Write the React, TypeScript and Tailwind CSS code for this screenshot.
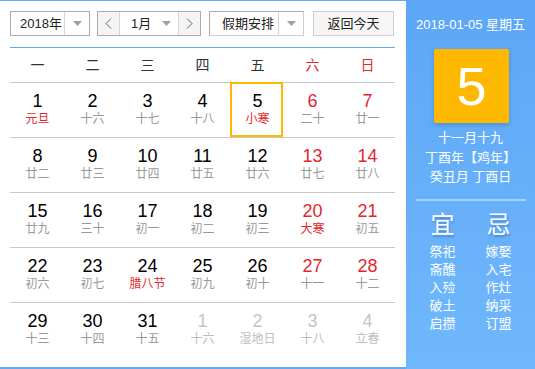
const FONT = { fontFamily: '"Liberation Sans", "Noto Sans CJK SC", sans-serif' }

type Day = { d: number; l: string; kind?: 'wk' | 'we' | 'next'; fest?: boolean }

const weeks: Day[][] = [
  [
    { d: 1, l: '元旦', fest: true },
    { d: 2, l: '十六' },
    { d: 3, l: '十七' },
    { d: 4, l: '十八' },
    { d: 5, l: '小寒', fest: true },
    { d: 6, l: '二十', kind: 'we' },
    { d: 7, l: '廿一', kind: 'we' },
  ],
  [
    { d: 8, l: '廿二' },
    { d: 9, l: '廿三' },
    { d: 10, l: '廿四' },
    { d: 11, l: '廿五' },
    { d: 12, l: '廿六' },
    { d: 13, l: '廿七', kind: 'we' },
    { d: 14, l: '廿八', kind: 'we' },
  ],
  [
    { d: 15, l: '廿九' },
    { d: 16, l: '三十' },
    { d: 17, l: '初一' },
    { d: 18, l: '初二' },
    { d: 19, l: '初三' },
    { d: 20, l: '大寒', kind: 'we', fest: true },
    { d: 21, l: '初五', kind: 'we' },
  ],
  [
    { d: 22, l: '初六' },
    { d: 23, l: '初七' },
    { d: 24, l: '腊八节', fest: true },
    { d: 25, l: '初九' },
    { d: 26, l: '初十' },
    { d: 27, l: '十一', kind: 'we' },
    { d: 28, l: '十二', kind: 'we' },
  ],
  [
    { d: 29, l: '十三' },
    { d: 30, l: '十四' },
    { d: 31, l: '十五' },
    { d: 1, l: '十六', kind: 'next' },
    { d: 2, l: '湿地日', kind: 'next' },
    { d: 3, l: '十八', kind: 'next' },
    { d: 4, l: '立春', kind: 'next' },
  ],
]

const weekdays = ['一', '二', '三', '四', '五', '六', '日']
const yi = ['祭祀', '斋醮', '入殓', '破土', '启攒']
const ji = ['嫁娶', '入宅', '作灶', '纳采', '订盟']

function Caret() {
  return (
    <svg width="9" height="5" viewBox="0 0 9 5">
      <path d="M0 0h9L4.5 5z" fill="#a0a0a0" />
    </svg>
  )
}

function DayCell({ day, selected }: { day: Day; selected: boolean }) {
  const numColor =
    day.kind === 'next' ? 'text-[#c4c4c4]' : day.kind === 'we' ? 'text-[#e3262d]' : 'text-black'
  const lunarColor =
    day.kind === 'next' ? 'text-[#bdbdbd]' : day.fest ? 'text-[#e3262d]' : 'text-[#999]'
  return (
    <div className="relative flex flex-col items-center pt-[8px]">
      {selected && (
        <div className="absolute left-0 top-[-1px] w-[53px] h-[55px] border-2 border-[#ffb800]" />
      )}
      <span className={`text-[18px] leading-[20px] ${numColor}`}>{day.d}</span>
      <span className={`text-[12px] leading-[16px] ${lunarColor}`}>{day.l}</span>
    </div>
  )
}

export default function App() {
  return (
    <div className="flex w-[535px] h-[369px] bg-white" style={FONT}>
      <div className="w-[406px] h-full border-t border-b-2 border-[#5faaf5] pl-[10px] pr-[11px] pt-[10px]">
        <div className="flex items-center h-[25px] text-[13px] text-[#222]">
          <div className="flex h-[25px] w-[80px] border border-[#ababab]">
            <div className="flex-1 flex items-center pl-[9px]">2018年</div>
            <div className="w-[25px] flex items-center justify-center border-l border-[#d6d6d6]">
              <Caret />
            </div>
          </div>
          <div className="flex h-[25px] w-[104px] ml-[7px] border border-[#ababab]">
            <div className="w-[22px] flex items-center justify-center bg-[#f4f4f4] border-r border-[#d6d6d6] text-[#555]">
              <svg width="7" height="11" viewBox="0 0 7 11">
                <path d="M6 0.5L1 5.5l5 5" stroke="#666" fill="none" />
              </svg>
            </div>
            <div className="flex-1 flex items-center pl-[11px] pr-[7px] justify-between">
              <span>1月</span>
              <Caret />
            </div>
            <div className="w-[22px] flex items-center justify-center bg-[#f4f4f4] border-l border-[#d6d6d6]">
              <svg width="7" height="11" viewBox="0 0 7 11">
                <path d="M1 0.5l5 5-5 5" stroke="#666" fill="none" />
              </svg>
            </div>
          </div>
          <div className="flex h-[25px] w-[95px] ml-[8px] border border-[#ababab] border-r-[#cfcfcf] border-b-[#cfcfcf]">
            <div className="flex-1 flex items-center pl-[12px]">假期安排</div>
            <div className="w-[25px] flex items-center justify-center border-l border-[#d6d6d6]">
              <Caret />
            </div>
          </div>
          <div className="flex h-[25px] w-[81px] ml-[9px] items-center justify-center border border-[#cfcfcf] bg-[#f6f6f6]">
            返回今天
          </div>
        </div>

        <div className="mt-[11px] border-t border-[#5fa8f2]">
          <div className="grid grid-cols-7 h-[35px] border-b border-[#c8c8c8] text-[14px]">
            {weekdays.map((w, i) => (
              <div
                key={w}
                className={`flex items-center justify-center ${i >= 5 ? 'text-[#e3262d]' : 'text-[#333]'}`}
              >
                {w}
              </div>
            ))}
          </div>
          {weeks.map((wk, r) => (
            <div
              key={r}
              className={`grid grid-cols-7 h-[55px] ${r < weeks.length - 1 ? 'border-b border-[#c8c8c8]' : ''}`}
            >
              {wk.map((day, c) => (
                <DayCell key={c} day={day} selected={r === 0 && c === 4} />
              ))}
            </div>
          ))}
        </div>
      </div>

      <div className="w-[129px] h-full bg-linear-to-b from-[#5ca7f6] to-[#70b8fc] flex flex-col items-center text-white">
        <div className="mt-[16px] text-[13px] leading-[18px]">2018-01-05 星期五</div>
        <div className="mt-[15px] ml-[2px] w-[75px] h-[74px] rounded-[2px] bg-[#ffb800] shadow-[0_2px_4px_rgba(30,90,160,0.35)] flex items-center justify-center text-[54px] leading-none">
          5
        </div>
        <div className="mt-[5px] text-[13px] leading-[19.5px] text-center">
          <div>十一月十九</div>
          <div>丁酉年【鸡年】</div>
          <div>癸丑月 丁酉日</div>
        </div>
        <div className="mt-[12px] w-[110px] h-[2px] bg-[#a5d3fd]" />
        <div className="mt-[9px] grid grid-cols-2 w-[112px] text-center">
          <div className="text-[24px] leading-[30px] [text-shadow:1px_2px_2px_rgba(40,90,160,0.45)]">宜</div>
          <div className="text-[24px] leading-[30px] [text-shadow:1px_2px_2px_rgba(40,90,160,0.45)]">忌</div>
          <div className="mt-[3px] text-[13px] leading-[18px]">
            {yi.map((t) => (
              <div key={t}>{t}</div>
            ))}
          </div>
          <div className="mt-[3px] text-[13px] leading-[18px]">
            {ji.map((t) => (
              <div key={t}>{t}</div>
            ))}
          </div>
        </div>
      </div>
    </div>
  )
}
